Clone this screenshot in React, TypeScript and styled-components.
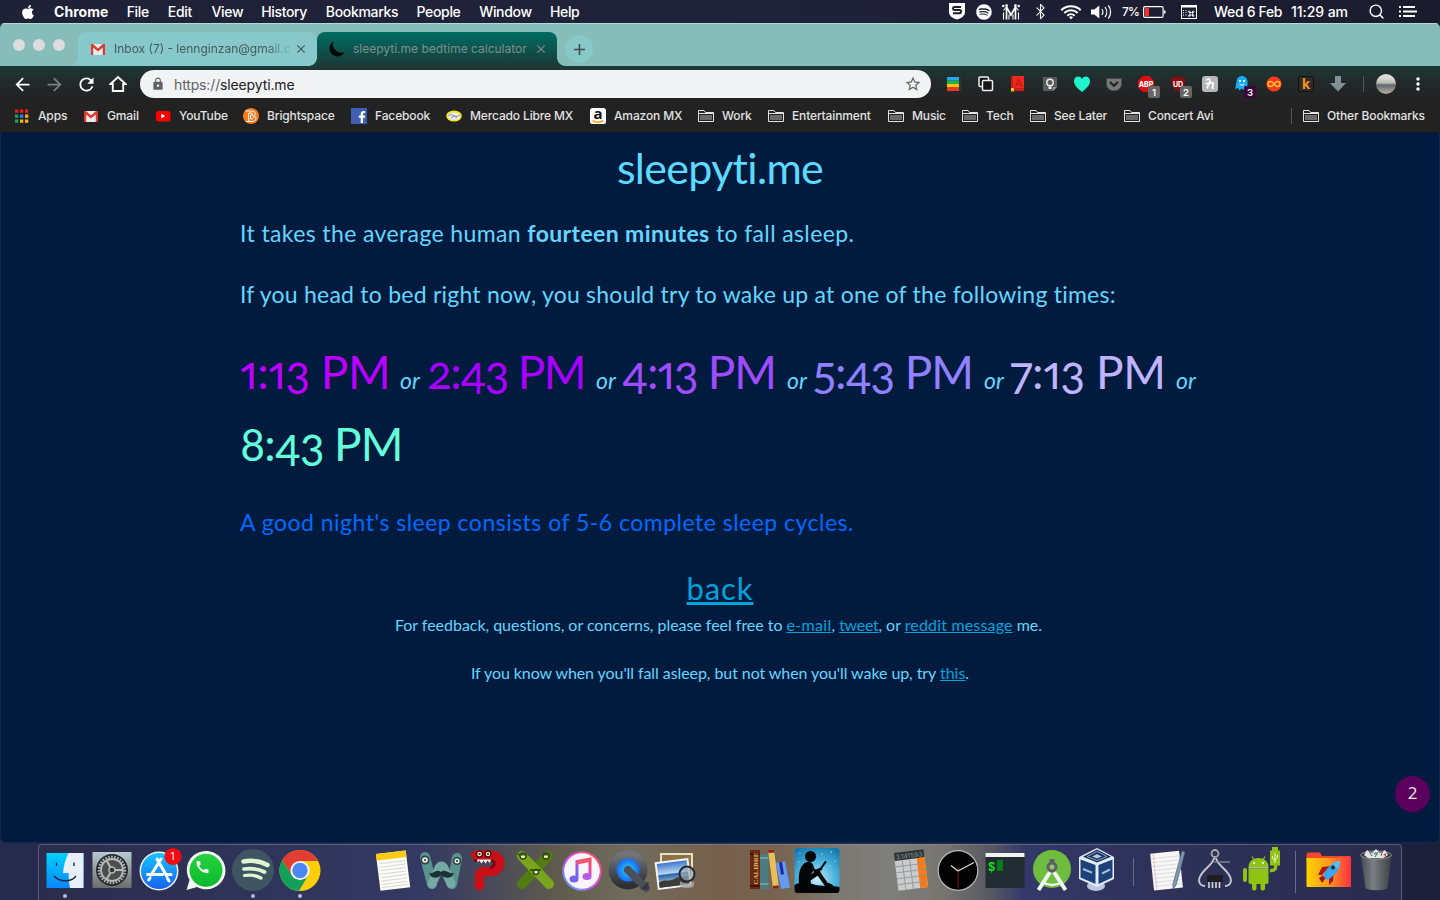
import React from "react";
import styled, { createGlobalStyle } from "styled-components";
import { FaApple, FaFacebookF, FaSpotify } from "react-icons/fa";
import { MdArrowBack, MdArrowForward, MdRefresh, MdLock, MdStarBorder, MdMoreVert, MdCall, MdClose, MdAdd } from "react-icons/md";
import { Bluetooth, Search } from "lucide-react";

const GlobalStyle = createGlobalStyle`
  * { box-sizing: border-box; }
  body { margin: 0; background: #20233f; overflow: hidden; }
  svg { display: block; flex: none; }
`;

const Desktop = styled.div`
  width: 1440px;
  height: 900px;
  display: flex;
  flex-direction: column;
  overflow: hidden;
  background: linear-gradient(90deg, #262a4c, #2a2d4e 50%, #1d203b);
  font-family: Inter, sans-serif;
`;

/* ---------- menu bar ---------- */
const MenuBar = styled.header`
  height: 23px;
  flex: none;
  display: flex;
  align-items: center;
  padding: 0 23px 0 20px;
  background: linear-gradient(90deg, #1f2137, #20223a 50%, #1a1b2d);
  color: #fff;
  font-size: 14px;
  font-weight: 500;
  letter-spacing: -0.33px;
  white-space: pre;
`;
const AppleMark = styled(FaApple)`
  width: 16px;
  height: 16px;
  margin-right: 18px;
`;
const MenuItem = styled.span<{ $w: number; $bold?: boolean }>`
  width: ${(p) => p.$w}px;
  margin-right: 18.7px;
  font-weight: ${(p) => (p.$bold ? 700 : 500)};
  letter-spacing: ${(p) => (p.$bold ? "0.05px" : "-0.33px")};
`;
const Status = styled.div`
  display: flex;
  align-items: center;
  margin-left: auto;
`;
const StatusSlot = styled.div<{ $w: number; $ls?: number }>`
  width: ${(p) => p.$w}px;
  display: flex;
  align-items: center;
  letter-spacing: ${(p) => p.$ls ?? -0.33}px;
`;
const Percent = styled.span`
  width: 21px;
  font-size: 12px;
  letter-spacing: -0.8px;
`;

/* ---------- browser window ---------- */
const Window = styled.div`
  height: 820px;
  flex: none;
  display: flex;
  flex-direction: column;
  overflow: hidden;
  border-radius: 5px 5px 6px 6px;
  background: #222;
`;
const TabStrip = styled.div`
  height: 43px;
  flex: none;
  display: flex;
  align-items: flex-end;
  border-top: 1px solid #b4dad7;
  background: #86bdb9;
`;
const Lights = styled.div`
  width: 78px;
  height: 42px;
  display: flex;
  align-items: center;
  gap: 8px;
  padding: 0 0 1px 13px;
`;
const Light = styled.span`
  width: 12px;
  height: 12px;
  border-radius: 50%;
  background: #dcdcdc;
`;
const Tab = styled.div<{ $active?: boolean }>`
  position: relative;
  width: ${(p) => (p.$active ? 240 : 239)}px;
  height: 34px;
  display: flex;
  align-items: center;
  padding: 0 9px 1px 12px;
  border-radius: 8px 8px 0 0;
  background: ${(p) => (p.$active ? "linear-gradient(#006c62, #0a5750 45%, #1c3936)" : "#87c9ca")};
  color: ${(p) => (p.$active ? "#7e8f8b" : "#46595b")};
  &::before,
  &::after {
    content: "";
    position: absolute;
    bottom: 0;
    width: 8px;
    height: 8px;
  }
  &::before {
    left: -8px;
    background: radial-gradient(circle at 0 0, transparent 7.5px, ${(p) => (p.$active ? "#1b403c" : "#87c9ca")} 8px);
  }
  &::after {
    right: -8px;
    background: ${(p) => (p.$active ? "radial-gradient(circle at 8px 0, transparent 7.5px, #1b403c 8px)" : "none")};
  }
`;
const TabTitle = styled.span<{ $fade?: boolean }>`
  flex: 1;
  margin-left: 8px;
  white-space: nowrap;
  font-size: 12px;
  ${(p) => p.$fade && "mask-image: linear-gradient(90deg, #000 152px, transparent 180px);"}
`;
const NewTab = styled.div`
  width: 28px;
  height: 28px;
  margin: 0 0 3px 8px;
  display: flex;
  align-items: center;
  justify-content: center;
  border-radius: 50%;
  background: #87c9c8;
  color: #46494a;
`;
const Toolbar = styled.div`
  height: 36px;
  flex: none;
  display: flex;
  align-items: center;
  padding-left: 6px;
  background: linear-gradient(#1c3936, #222a29 45%, #222);
  color: #fff;
`;
const ToolSlot = styled.div<{ $dim?: boolean; $w?: number }>`
  width: ${(p) => p.$w ?? 32}px;
  height: 32px;
  flex: none;
  display: flex;
  align-items: center;
  justify-content: center;
  opacity: ${(p) => (p.$dim ? 0.4 : 1)};
`;
const AddressBar = styled.div`
  width: 791px;
  height: 28px;
  flex: none;
  margin: 0 7px 0 6px;
  display: flex;
  align-items: center;
  padding: 0 9px 0 11px;
  border-radius: 14px;
  background: #f1f3f4;
  color: #5f6368;
  font-size: 14px;
  letter-spacing: -0.14px;
`;
const Address = styled.span`
  flex: 1;
  margin-left: 9px;
  b { font-weight: 400; color: #202124; }
`;
const Divider = styled.span<{ $h: number }>`
  width: 1px;
  height: ${(p) => p.$h}px;
  background: #555;
`;
const Profile = styled.div`
  width: 20px;
  height: 20px;
  flex: none;
  margin: 0 12px 0 4px;
  border-radius: 50%;
  background: linear-gradient(#dcdad6 20%, #b9bab8 45%, #5f666b 55%, #8b8a86 75%, #b7aea2);
`;
const Bookmarks = styled.nav`
  height: 31px;
  flex: none;
  display: flex;
  align-items: center;
  gap: 16px;
  padding: 0 14px 3px;
  background: #222;
  border-bottom: 1px solid #101c2c;
  color: #e2e2e2;
  font-size: 12px;
  font-weight: 500;
  letter-spacing: -0.14px;
`;
const Bookmark = styled.div`
  display: flex;
  align-items: center;
  gap: 8px;
`;
const BookmarkLabel = styled.span<{ $w: number }>`
  width: ${(p) => p.$w}px;
  white-space: nowrap;
`;
const OtherBookmarks = styled(Bookmark)`
  margin-left: auto;
  ${Divider} { margin-right: 3px; }
`;

/* ---------- page ---------- */
const Page = styled.main`
  position: relative;
  flex: 1;
  padding: 5px 239px 0;
  background: #001b3e;
  border: 1px solid #0b2850;
  border-top: 0;
  border-radius: 0 0 6px 6px;
  color: #64d6ff;
  font-family: Lato, sans-serif;
  white-space: pre;
`;
const Title = styled.h1`
  margin: 0;
  font-size: 43px;
  font-weight: 400;
  line-height: 60px;
  letter-spacing: -0.7px;
  text-align: center;
  font-variant-ligatures: none;
  color: #5cdaff;
`;
const Sentence = styled.p<{ $top: number; $ls: number; $color?: string }>`
  margin: ${(p) => p.$top}px 0 0;
  font-size: 23px;
  line-height: 30px;
  letter-spacing: ${(p) => p.$ls}px;
  color: ${(p) => p.$color ?? "inherit"};
`;
const Times = styled.p`
  margin: 27px 0 -1px;
  font-size: 46px;
  line-height: 72px;
  white-space: normal;
`;
const Time = styled.span<{ $w: number; $ls: number; $color: string }>`
  display: inline-block;
  width: ${(p) => p.$w}px;
  white-space: nowrap;
  color: ${(p) => p.$color};
  letter-spacing: ${(p) => p.$ls}px;
  font-feature-settings: "onum", "pnum";
`;
const Or = styled.em<{ $w: number }>`
  display: inline-block;
  width: ${(p) => p.$w}px;
  font-size: 23px;
  line-height: 30px;
  white-space: nowrap;
`;
const Link = styled.a<{ $ls?: number }>`
  color: #00a3dc;
  text-decoration: underline;
  letter-spacing: ${(p) => p.$ls ?? 0}px;
`;
const Back = styled.p`
  margin: 33px 0 0;
  font-size: 31px;
  line-height: 36px;
  text-align: center;
`;
const Note = styled.p<{ $top: number; $shift?: number; $ls: number }>`
  margin: ${(p) => p.$top}px 0 0;
  padding-right: ${(p) => p.$shift ?? 0}px;
  font-size: 16px;
  line-height: 20px;
  text-align: center;
  letter-spacing: ${(p) => p.$ls}px;
`;
const CountBadge = styled.div`
  position: absolute;
  right: 9px;
  bottom: 30px;
  width: 35px;
  height: 36px;
  border-radius: 50%;
  background: #5b005c;
  color: #f1e6f1;
  font: 500 17px/34px "Open Sans", sans-serif;
  text-align: center;
`;

/* ---------- dock ---------- */
const Dock = styled.footer`
  width: 1364px;
  height: 56px;
  margin: 1px 0 0 38px;
  display: flex;
  padding-left: 2px;
  border: 1px solid rgba(150, 150, 170, 0.45);
  border-bottom: 0;
  border-radius: 4px 4px 0 0;
  background: linear-gradient(90deg, #2b2d4c 0, #2f3358 200px, #333962 380px, #4b4c58 460px, #605b4c 520px, #716c5e 590px, #755f4a 680px, #766450 740px, #7c7872 800px, #7f7f7b 850px, #75746f 905px, #595962 950px, #34396a 985px, #2f335c 1080px, #2a2c4d 1364px);
`;
const DockSlot = styled.div<{ $running?: boolean }>`
  position: relative;
  width: 47px;
  padding-top: 2px;
  display: flex;
  justify-content: center;
  align-items: flex-start;
  flex: none;
  ${(p) => p.$running && `&::after {
    content: "";
    position: absolute;
    top: 49px;
    width: 4px;
    height: 4px;
    border-radius: 50%;
    background: #b8bad2;
  }`}
`;
const DockDivider = styled.div<{ $w: number; $h: number }>`
  width: ${(p) => p.$w}px;
  flex: none;
  display: flex;
  justify-content: center;
  padding-top: ${(p) => (p.$h > 40 ? 6 : 13)}px;
  &::after {
    content: "";
    width: 1px;
    height: ${(p) => p.$h}px;
    background: #6a6d88;
  }
`;

/* ---------- small icons ---------- */
const Wifi = () => (
  <svg width="22" height="16" viewBox="0 0 22 16" fill="none" stroke="#fff" strokeWidth="2">
    <path d="M1.3 6.2a14 14 0 0 1 19.4 0M4.3 9a9.8 9.8 0 0 1 13.4 0M7.3 11.7a5.6 5.6 0 0 1 7.4 0" />
    <path d="M9 13.2a3 3 0 0 1 4 0l-2 2.2z" fill="#fff" stroke="none" />
  </svg>
);
const Volume = () => (
  <svg width="22" height="16" viewBox="0 0 22 16" fill="none" stroke="#fff" strokeWidth="1.2">
    <path d="M0 5.5h3.3L8.3 1.6v12.8L3.3 10.5H0z" fill="#fff" stroke="none" />
    <path d="M10.8 5a5 5 0 0 1 0 6M14 3a8 8 0 0 1 0 10M17.3 1.3a11 11 0 0 1 0 13.4" />
  </svg>
);
const Battery = () => (
  <svg width="24" height="12" viewBox="0 0 24 12">
    <rect x=".6" y=".6" width="19.5" height="10.8" rx="1.5" fill="none" stroke="#fff" strokeWidth="1.2" />
    <rect x="2" y="2" width="4" height="8" fill="#ff2b30" />
    <path d="M21.2 4c2 .5 2 3.5 0 4z" fill="#fff" />
  </svg>
);
const ShieldMark = () => (
  <svg width="16" height="17" viewBox="0 0 16 17">
    <path d="M0 0h16v9c0 4-4 6.5-8 7.5C4 15.5 0 13 0 9z" fill="#fff" />
    <path d="M12 4H5.5a1.500 1.500 0 0 0 0 3h5a1.500 1.500 0 0 1 0 3.200H4" fill="none" stroke="#1c1d30" strokeWidth="1.9" />
  </svg>
);
const AntennaMark = () => (
  <svg width="18" height="16" viewBox="0 0 18 16" fill="none" stroke="#fff">
    <path d="M4.500 15.500V3l4.500 8 4.500-8v12.500" strokeWidth="1.700" />
    <path d="M1.500 15.500V8.500M16.500 15.500V8.500M4.500 3L1.500 6.500M13.500 3l3 3.500M7 15.500v-5M11 15.500v-5" strokeWidth="1.100" />
    <g fill="#fff" stroke="none"><circle cx="1.300" cy="2" r="1.200" /><circle cx="4.800" cy="1.500" r="1.200" /><circle cx="13.200" cy="1.500" r="1.200" /><circle cx="16.700" cy="2" r="1.200" /></g>
  </svg>
);
const InputMenu = () => (
  <svg width="16" height="14" viewBox="0 0 16 14">
    <rect x=".5" y=".5" width="15" height="13" fill="none" stroke="#fff" />
    <path d="M0 0h16v2.500H0z" fill="#fff" />
    <path d="M2.500 5v7M5 5v7" stroke="#fff" strokeDasharray="1 1.300" />
    <g fill="none" stroke="#fff" strokeWidth=".8">
      <path d="M9 6.500v4.500M11.500 6.500v4.500M8 7.500h4.500M8 10h4.500" />
      <circle cx="8.200" cy="6.700" r=".8" /><circle cx="12.300" cy="6.700" r=".8" /><circle cx="8.200" cy="10.800" r=".8" /><circle cx="12.300" cy="10.800" r=".8" />
    </g>
  </svg>
);
const ListMark = () => (
  <svg width="18" height="11" viewBox="0 0 18 11" stroke="#fff" strokeWidth="1.8">
    <path d="M0 1h2M0 5.500h2M0 10h2M4 1h12M4 5.500h14M4 10h12" />
  </svg>
);
const GmailMark = () => (
  <svg width="16" height="16" viewBox="0 0 16 16">
    <path d="M2 3h12v11H2z" fill="#e9e9e9" />
    <path d="M1 3h2l5 4.500L13 3h2v11h-2.200V6.600L8 10.500 3.200 6.600V14H1z" fill="#db3a30" />
  </svg>
);
const MoonMark = () => (
  <svg width="16" height="16" viewBox="0 0 16 16">
    <path d="M4.500.5A8 8 0 1 0 15.700 11 8.300 8.300 0 0 1 4.500.5z" fill="#020706" />
  </svg>
);
const HomeMark = () => (
  <svg width="18" height="18" viewBox="0 0 18 18" fill="none" stroke="#fff" strokeWidth="1.9">
    <path d="M1.500 9L9 2l7.500 7h-2.300v7H3.800V9z" />
  </svg>
);
const AppsMark = () => (
  <svg width="16" height="16" viewBox="0 0 16 16">
    {["#f11b12", "#f11b12", "#f11b12", "#12a45a", "#2b83f7", "#f7b10c", "#12a45a", "#f7b10c", "#f7b10c"].map((c, i) => (
      <rect key={i} x={1 + (i % 3) * 5} y={1.5 + Math.floor(i / 3) * 5} width="3.3" height="3.3" fill={c} />
    ))}
  </svg>
);
const YouTubeMark = () => (
  <svg width="16" height="16" viewBox="0 0 16 16">
    <rect x="1" y="3" width="14.5" height="10.5" rx="2.5" fill="#f00" />
    <path d="M6.300 5.800v4.600l4-2.300z" fill="#fff" />
  </svg>
);
const BrightspaceMark = () => (
  <svg width="16" height="16" viewBox="0 0 16 16">
    <circle cx="8" cy="8" r="8" fill="#f47a1c" />
    <path d="M2.500 3h6.300c4 0 4.200 3.600 2.200 4.800 3 1.200 2.600 5.700-1.700 5.700H3M5.700 13V5h3c1.500 0 1.500 2.200 0 2.200H7.500m1.300 0c2.500 0 2.500 3.600 0 3.600H7.500V7.200" fill="none" stroke="#fff" strokeWidth="1" />
  </svg>
);
const FacebookMark = () => (
  <svg width="16" height="16" viewBox="0 0 16 16">
    <path d="M0 0h16v16H0z" fill="#3f5fb4" />
    <FaFacebookF x={5} y={3} width={11} height={13} color="#fff" />
  </svg>
);
const MercadoMark = () => (
  <svg width="16" height="16" viewBox="0 0 16 16">
    <ellipse cx="8" cy="8" rx="7.8" ry="5.5" fill="#f5e61b" />
    <ellipse cx="8" cy="8.3" rx="6.3" ry="3.7" fill="#e9edf4" />
    <path d="M2 7.500c3-1 4-1 6 .3s4 0 6-.5M5 10l3-2 3 2" fill="none" stroke="#7a84a8" strokeWidth=".9" />
  </svg>
);
const AmazonMark = () => (
  <svg width="16" height="16" viewBox="0 0 16 16" overflow="visible">
    <rect width="16" height="16" rx="2.5" fill="#fff" />
    <text x="8" y="10.8" textAnchor="middle" fontFamily="Open Sans" fontWeight="700" fontSize="15" fill="#111">a</text>
    <path d="M2.500 12.500c3 2.300 8 2.300 11 .2" fill="none" stroke="#f90" strokeWidth="1.5" />
  </svg>
);
const FolderMark = () => (
  <svg width="16" height="16" viewBox="0 0 16 16">
    <path d="M.5 13.500v-11h5.500l1.500 2h8v9z" fill="#222" stroke="#e4e4e4" />
    <path d="M2 7h12v5H2z" fill="#6a6a6a" />
    <path d="M1 5.500h14.500" stroke="#e4e4e4" />
  </svg>
);

/* ---------- extension icons ---------- */
const Ext = ({ children, count, tone = "#666" }: { children: React.ReactNode; count?: string; tone?: string }) => (
  <svg width="32" height="32" viewBox="0 0 32 32">
    {children}
    {count && <rect x="18" y="18" width="12" height="12" rx="2" fill={tone} />}
    {count && <text x="24" y="27.5" textAnchor="middle" fontFamily="Inter" fontWeight="600" fontSize="9.5" fill="#fff">{count}</text>}
  </svg>
);
const Extensions = () => (
  <>
    <Ext>
      <path d="M9 9h14v14H9z" fill="#333" />
      <path d="M9 9h12v3.500H9z" fill="#24a8ee" /><path d="M9 12.500h12V16H9z" fill="#21b14b" /><path d="M9 16h12v3.500H9z" fill="#fbbf10" /><path d="M9 19.500h12V23H9z" fill="#ee3524" />
    </Ext>
    <Ext>
      <g fill="#161616" stroke="#eee" strokeWidth="1.5"><rect x="9" y="9" width="9.5" height="9.5" rx="1" /><rect x="12.500" y="12.500" width="10" height="10" rx="1" /></g>
    </Ext>
    <Ext>
      <path d="M9 8h13v15H9z" fill="#c61d16" /><path d="M11 8h11v12H11z" fill="#f0281e" /><path d="M9 20h3v4l-1.500-1L9 24z" fill="#e5c82e" />
      <text x="16.5" y="18.5" textAnchor="middle" fontFamily="Liberation Sans" fontSize="11" fill="#b5170f">A</text>
    </Ext>
    <Ext>
      <path d="M9 9h14v10l-4 4H9z" fill="#5b5b5b" /><path d="M19 23v-4h4z" fill="#999" />
      <circle cx="16" cy="14.500" r="3.2" fill="none" stroke="#eee" strokeWidth="1.4" /><path d="M14.500 18.500h3v2.500h-3z" fill="#eee" />
    </Ext>
    <Ext><path d="M16 24C11 20 8 17 8 13c0-5 6-6 8-2 2-4 8-3 8 2 0 4-3 7-8 11z" fill="#1df3cd" /></Ext>
    <Ext>
      <path d="M8.500 10.500h15v5.500c0 9-15 9-15 0z" fill="#777" stroke="#494949" /><path d="M12 14l4 3.800 4-3.800" fill="none" stroke="#222" strokeWidth="2.200" />
    </Ext>
    <Ext count="1">
      <path d="M12.700 8h6.600l4.700 4.700v6.600L19.300 24h-6.600L8 19.300v-6.600z" fill="#df0c12" />
      <text x="16" y="18.8" textAnchor="middle" fontFamily="Inter" fontWeight="800" fontSize="7" fill="#fff">ABP</text>
    </Ext>
    <Ext count="2">
      <path d="M9 10c3 0 5-1 7-2 2 1 4 2 7 2 0 7-2 11-7 14-5-3-7-7-7-14z" fill="#8a0c10" />
      <text x="16" y="18.500" textAnchor="middle" fontFamily="Inter" fontWeight="700" fontSize="7" fill="#fff">UD</text>
    </Ext>
    <Ext>
      <rect x="8" y="8" width="16" height="16" rx="3" fill="#b5b7b8" />
      <path d="M12 12.500c2-2.500 5-2 3.500 1.500L13 20.500M11.500 15.500h4M14.500 16.500c3-3 5.500-2 4.500.5-.8 2-1 3.500.8 3.200" fill="none" stroke="#fff" strokeWidth="1.700" />
    </Ext>
    <Ext count="3" tone="#3b0540">
      <path d="M10.500 14c0-8 11-8 11 0v6l-2-1-2 3-2-1.500-2 2L12 20l-3 1z" fill="#17a9f4" /><circle cx="14" cy="13" r="1.1" fill="#fff" /><circle cx="18" cy="13" r="1.1" fill="#fff" />
      <path d="M13.500 16c1.500 1.500 3.500 1.500 5 0" stroke="#fff" fill="none" />
    </Ext>
    <Ext>
      <circle cx="16" cy="16" r="7.6" fill="#f8391d" />
      <path d="M16 16c-1.500-2-2.500-2.500-3.500-2.500a2.500 2.500 0 0 0 0 5c1 0 2-.5 3.500-2.500s2.500-2.500 3.500-2.500a2.500 2.500 0 0 1 0 5c-1 0-2-.5-3.500-2.500z" fill="none" stroke="#ffc42e" strokeWidth="1.4" />
    </Ext>
    <Ext>
      <rect x="8.5" y="8.5" width="15" height="15" rx="1.5" fill="#2e2a27" stroke="#111" />
      <text x="16" y="21" textAnchor="middle" fontFamily="Inter" fontWeight="700" fontSize="14" fill="#f7921c">k</text>
    </Ext>
    <Ext><path d="M13 8h6v7h5l-8 8.500L8 15h5z" fill="#7f9297" /></Ext>
  </>
);

/* ---------- dock icons ---------- */
const Icon = ({ children }: { children: React.ReactNode }) => (
  <svg width="46" height="46" viewBox="0 0 46 46" overflow="visible">{children}</svg>
);
const Gradients = () => (
  <svg width="0" height="0">
    <defs>
      <linearGradient id="finder" x2="0" y2="1"><stop stopColor="#00d2ff" /><stop offset="1" stopColor="#0b86fb" /></linearGradient>
      <linearGradient id="silver" x2="0" y2="1"><stop stopColor="#b6cbd0" /><stop offset="1" stopColor="#6d6d6d" /></linearGradient>
      <linearGradient id="store" x2="0" y2="1"><stop stopColor="#18c4fc" /><stop offset="1" stopColor="#1763f0" /></linearGradient>
      <linearGradient id="green" x2="0" y2="1"><stop stopColor="#29d33f" /><stop offset="1" stopColor="#08b92c" /></linearGradient>
      <linearGradient id="music" x1="1" x2="0" y2="1"><stop stopColor="#ff4a50" /><stop offset=".5" stopColor="#d94ad9" /><stop offset="1" stopColor="#4c6ff5" /></linearGradient>
      <linearGradient id="ring" x1="1" x2="0" y2="1"><stop stopColor="#ff4f3e" /><stop offset=".5" stopColor="#e04cf0" /><stop offset="1" stopColor="#2fb8f7" /></linearGradient>
      <radialGradient id="qt"><stop stopColor="#2ad0ff" /><stop offset="1" stopColor="#1046e8" /></radialGradient>
      <linearGradient id="steel" x2="0" y2="1"><stop stopColor="#70757c" /><stop offset="1" stopColor="#2c2f34" /></linearGradient>
      <linearGradient id="sea" x2="0" y2="1"><stop stopColor="#3c77cc" /><stop offset=".45" stopColor="#b9d6f2" /><stop offset=".5" stopColor="#2863aa" /><stop offset=".75" stopColor="#7fa3c6" /><stop offset="1" stopColor="#31465b" /></linearGradient>
      <radialGradient id="night" cx=".5" cy=".7" r=".8"><stop stopColor="#c7ebf7" /><stop offset=".5" stopColor="#4fb5df" /><stop offset="1" stopColor="#1176ad" /></radialGradient>
      <linearGradient id="fire"><stop stopColor="#ffd300" /><stop offset=".5" stopColor="#ff9a1e" /><stop offset="1" stopColor="#ff3040" /></linearGradient>
      <linearGradient id="bin"><stop stopColor="#44484c" /><stop offset=".4" stopColor="#7b7f83" /><stop offset="1" stopColor="#3c4044" /></linearGradient>
    </defs>
  </svg>
);
const Finder = () => (
  <Icon>
    <path d="M4.500 6h37v35h-37z" fill="url(#finder)" />
    <path d="M26.500 6c-3 6-5 13-5.500 20h5.700c-.2 5 .3 10 1.300 15h13.500V6z" fill="#e9eff8" />
    <path d="M14.500 15.500v3.500M32 15.500v3.500" stroke="#123" strokeWidth="1.3" />
    <path d="M12 29c6 6.500 17 6.500 22 0" fill="none" stroke="#0d2132" strokeWidth="1.3" />
  </Icon>
);
const Settings = () => (
  <Icon>
    <path d="M3.500 5h39v36h-39z" fill="url(#silver)" />
    <circle cx="23" cy="23" r="16" fill="#272c2e" />
    <circle cx="23" cy="23" r="13" fill="none" stroke="#b4b8b8" strokeWidth="2.500" strokeDasharray="1.600 1.400" />
    <circle cx="23" cy="23" r="11" fill="#4a4f4e" stroke="#b4b8b8" strokeWidth="1.800" />
    <path d="M23 23h11M23 23l-5.500-9.500M23 23l-5.500 9.500" stroke="#b4b8b8" strokeWidth="2.200" />
    <circle cx="23" cy="23" r="3" fill="#2d3335" stroke="#aeb3b2" strokeWidth="1.5" />
  </Icon>
);
const AppStore = () => (
  <Icon>
    <circle cx="23" cy="24" r="19.5" fill="#eef3f8" /><circle cx="23" cy="24" r="18" fill="url(#store)" />
    <g stroke="#fff" strokeWidth="3" strokeLinecap="round"><path d="M21 12l10 17.500M25 12L15 28M11.500 27.500h15M31 27.500h4M14 31l-1.300 2M31.500 31.500l1.500 2.500" /></g>
    <circle cx="37" cy="9.5" r="8.6" fill="#f20b12" />
    <text x="37" y="13.3" textAnchor="middle" fontFamily="Open Sans" fontSize="11" fill="#fff">1</text>
  </Icon>
);
const WhatsApp = () => (
  <Icon>
    <path d="M3.500 43l3-10C-1 18 9 4 23 4c11 0 19.500 9 19.500 19.500C42.500 37 28 47 14 40z" fill="#f2f5f2" />
    <circle cx="23" cy="23.3" r="16.5" fill="url(#green)" /><MdCall x={11.5} y={12} width={23} height={23} color="#fff" />
  </Icon>
);
const Spotify = () => (
  <Icon>
    <circle cx="23" cy="23" r="21" fill="#3f5662" />
    <g fill="none" stroke="#e0f5d3" strokeLinecap="round"><path d="M13.500 14.500c9-1.500 17-.5 24 3.500" strokeWidth="4.5" /><path d="M14 22c7.500-1 14-.5 20.500 3" strokeWidth="3.7" /><path d="M14.500 28.500c6-1 11-.5 16.500 2.500" strokeWidth="3.2" /></g>
  </Icon>
);
const Chrome = () => (
  <Icon>
    <circle cx="23" cy="23.5" r="20.5" fill="#ffce0b" />
    <path d="M5.200 13.200A20.500 20.500 0 0 1 41 14H23l-8.200 14.200z" fill="#e13d31" />
    <path d="M5.200 13.200l9.600 15 8.200 5 8.200-5L22 44A20.500 20.500 0 0 1 5.200 13.200z" fill="#14a05a" />
    <circle cx="23" cy="23.5" r="9.6" fill="#f3f5f8" /><circle cx="23" cy="23.5" r="7.7" fill="#4b87f2" />
  </Icon>
);
const Notes = () => (
  <Icon>
    <g transform="rotate(-7 23 23)">
      <path d="M7 5h30v37H7z" fill="#fbfbf8" /><path d="M7 5h30v6.500H7z" fill="#fccb10" />
      <path d="M9 15h26M9 18.500h26M9 22h26M9 25.500h26M9 29h26M9 32.500h26M9 36h26M9 39h26" stroke="#cfcfcb" strokeWidth=".8" />
    </g>
  </Icon>
);
const Word = () => (
  <Icon>
    <g fill="none" strokeLinecap="round" strokeLinejoin="round"><path d="M7 10l7 27M39 11l-5 26" stroke="#5a938e" strokeWidth="10" /><path d="M14 37l7-16q2.500-4 5 0l7 16" stroke="#74aaa3" strokeWidth="9" /></g>
    <circle cx="7" cy="13" r="4.5" fill="#27494b" /><circle cx="7" cy="13" r="2.8" fill="#f5edd8" /><circle cx="7" cy="13" r="1" fill="#222" /><circle cx="39" cy="14" r="4" fill="#27494b" /><circle cx="39" cy="14" r="2.5" fill="#f5edd8" /><circle cx="39" cy="14" r="1" fill="#222" />
    <path d="M11 26c4 2 7-5 12-1 5-4 8 3 13 1-2 6-9 6-13 2-3 4-10 4-12-2z" fill="#1d3236" />
  </Icon>
);
const Power = () => (
  <Icon>
    <path d="M11 8h13c15 0 14 16 1 16.500h-6q-4.500 0-4.500 4V39" fill="none" stroke="#c91018" strokeWidth="9.5" strokeLinecap="round" strokeLinejoin="round" />
    <path d="M9 13.500h17c5 0 4 7-1 7" fill="none" stroke="#7a080e" strokeWidth="2.500" />
    <circle cx="14.500" cy="7" r="3" fill="#f5e9cc" stroke="#5c0509" strokeWidth="1.5" /><circle cx="23" cy="7" r="3" fill="#f5e9cc" stroke="#5c0509" strokeWidth="1.5" /><circle cx="14.500" cy="7" r="1" fill="#222" /><circle cx="23" cy="7" r="1" fill="#222" />
    <path d="M12 12.500h14l-1.200 3.500-2.300-2.500-2 3-2-3-2 3-2-3-1.500 2z" fill="#fff" />
  </Icon>
);
const Excel = () => (
  <Icon>
    <path d="M36 9L10 37" stroke="#527c12" strokeWidth="10" strokeLinecap="round" /><path d="M10 9l27 28" stroke="#78a51c" strokeWidth="10" strokeLinecap="round" />
    <g fill="#f4eccb" stroke="#2e4a08" strokeWidth="1.500"><circle cx="11" cy="9" r="3" /><circle cx="34" cy="9" r="3" /><circle cx="24" cy="25" r="2.5" /></g>
    <path d="M6 7.500h9M30 7.500h8M18 23h11" stroke="#35550a" strokeWidth="2.2" />
  </Icon>
);
const Music = () => (
  <Icon>
    <circle cx="23" cy="24" r="19.8" fill="url(#ring)" /><circle cx="23" cy="24" r="17.8" fill="#f8f6fb" />
    <path d="M18 31V14.500l13-2.500v16.500" fill="none" stroke="url(#music)" strokeWidth="3" /><path d="M18 13.500l13-2.500v4l-13 2.500z" fill="#f7596a" />
    <ellipse cx="15" cy="32" rx="4.5" ry="3.5" fill="#7b63ee" /><ellipse cx="28" cy="29.500" rx="4.5" ry="3.5" fill="#b45be2" />
  </Icon>
);
const QuickTime = () => (
  <Icon>
    <circle cx="22" cy="23" r="15.500" fill="url(#qt)" stroke="url(#steel)" strokeWidth="8" /><path d="M22 23l18 18" stroke="#4b5057" strokeWidth="8" strokeLinecap="round" /><path d="M34 42.500h8.500V34z" fill="#34373c" />
  </Icon>
);
const Preview = () => (
  <Icon>
    <path d="M7 6h33v27H7z" fill="#e7dfc7" /><path d="M9 8h29v20H9z" fill="#8d7245" />
    <g transform="rotate(-7 20 26)"><path d="M3 13h34v28H3z" fill="#f4f4f2" /><path d="M5 15h30v24H5z" fill="url(#sea)" /><path d="M5 34c6-4 10 1 16-2s8 0 14-2v9H5z" fill="#3b3c38" /></g>
    <circle cx="34" cy="27" r="7.5" fill="#9aa8b4" fillOpacity=".7" stroke="#262a2e" strokeWidth="2" /><path d="M27 34c3 3 11 3 14 0v5c-3 3-11 3-14 0z" fill="#a8aaaa" fillOpacity=".8" />
  </Icon>
);
const Calibre = () => (
  <Icon>
    <path d="M3 3h10v39H3z" fill="#6b2810" /><path d="M3 7h10M3 39h10" stroke="#35130a" strokeWidth="1.5" /><text transform="translate(10.500 37.500) rotate(-90)" fontFamily="Liberation Serif" fontSize="7" fontWeight="700" fill="#e6bb63">CALIBRE</text>
    <path d="M13 7h8.500v35H13z" fill="#4b7c80" /><path d="M13 11h8.500M13 37h8.500" stroke="#99bcc0" />
    <path d="M21 3l6-.5 5 38-6 1z" fill="#e6bf5e" /><path d="M21 3l6-.5.5 3-6 .5zM26 39l5.500-.8.500 2.600-6 1z" fill="#8f2020" />
    <path d="M29 16l9-1.500 5 26-9 1.500z" fill="#659af2" /><path d="M32 15.500l3-.5 2 12-3 1z" fill="#1b2ba5" />
  </Icon>
);
const Kindle = () => (
  <Icon>
    <rect x=".5" y="1" width="45" height="45" rx="3" fill="url(#night)" />
    <path d="M.5 38c6-3 12-3 18-1 9 3 18 1 27 3v3q0 3-3 3h-39q-3 0-3-3z" fill="#030608" />
    <circle cx="16.500" cy="9.500" r="5.5" fill="#030608" /><path d="M5 37c-1-10 1-20 8-22 5-1 7 3 7 8l-4 6 1 8z" fill="#030608" />
    <g fill="none" stroke="#030608" strokeLinejoin="round" strokeLinecap="round"><path d="M10 35l14-9.500" strokeWidth="5" /><path d="M24 25.500L32 37l5 2" strokeWidth="4" /><path d="M17 19l4 5 6-2" strokeWidth="2.6" /><path d="M26.500 22l5-7" strokeWidth="2" /></g>
    <g fill="#dff4fb"><circle cx="6" cy="6" r=".6" /><circle cx="28" cy="7" r=".6" /><circle cx="37" cy="5" r=".7" /><circle cx="41" cy="14" r=".6" /><circle cx="36" cy="19" r=".6" /><circle cx="5" cy="15" r=".6" /></g>
  </Icon>
);
const Calculator = () => (
  <Icon>
    <g transform="rotate(-7 23 23)">
      <path d="M8 5h30v37H8z" fill="#c9cbce" /><path d="M8 4h30v8H8z" fill="#2d3436" /><path d="M30 12h8v30h-8z" fill="#fb7a13" />
      <path d="M8 18h30M8 24h30M8 30h30M8 36h30M15.500 12v30M23 12v30" stroke="#8f9193" strokeWidth=".8" />
      <text x="36" y="10.800" textAnchor="end" fontFamily="Inter" fontSize="6.500" fill="#8b9594">3.141593</text>
    </g>
  </Icon>
);
const Clock = () => (
  <Icon>
    <circle cx="23" cy="23.5" r="19.800" fill="#020202" stroke="#b9b8b6" strokeWidth="1.2" /><path d="M23 20v21" stroke="#7d1613" strokeWidth=".9" /><path d="M23 24l16-8.500M23 24l-7-5.500" stroke="#ddd" strokeWidth="1.3" />
  </Icon>
);
const Terminal = () => (
  <Icon>
    <path d="M3.500 6h39v35h-39z" fill="#212c33" /><path d="M3.500 6h39v4h-39z" fill="#f2f2f2" /><text x="6" y="24" fontFamily="Liberation Mono" fontWeight="700" fontSize="12" fill="#12e512">$</text><path d="M15 13h6v11h-6z" fill="#067d18" />
  </Icon>
);
const Studio = () => (
  <Icon>
    <circle cx="23" cy="22" r="19" fill="#6fbd3e" /><path d="M13 35c7 4 14 4 20 0" fill="none" stroke="#eef2ec" strokeWidth="2.5" /><path d="M21 25L9.500 43M25 25l11.500 18" stroke="#f2f4f2" strokeWidth="4" />
    <path d="M20.500 12h5v5h-5z" fill="#5c6166" /><circle cx="23" cy="20" r="4" fill="#91c66e" stroke="#5c6166" strokeWidth="3" />
  </Icon>
);
const VBox = () => (
  <Icon>
    <ellipse cx="20" cy="39" rx="9" ry="5" fill="#b9c8dd" /><path d="M3 10l18-9 17 9v22l-17 8L3 32z" fill="#e3ebf5" />
    <path d="M4.500 12.500L19.500 18v19L4.500 30.500zM22.500 18l14-5.500v18l-14 6.500z" fill="#1c427b" />
    <path d="M21 2.500l14 7.200L21 15.500 7 9.700z" fill="#14305c" />
    <path d="M21 4.500l10 5L21 13.500l-10-4z" fill="none" stroke="#b5c5da" strokeWidth=".8" /><path d="M16 9.500l5-2.500 5 2.500-5 2z" fill="#b5c5da" />
    <path d="M7 22l9 3.700M26 26.500l8-4" stroke="#a9bcd6" strokeWidth="2" />
  </Icon>
);
const TextEdit = () => (
  <Icon>
    <g transform="rotate(-6 23 23)"><path d="M7 5h29v37H7z" fill="#f7f7f5" /><path d="M7 10h29M7 14h29M7 18h29M7 22h29M7 26h29M7 30h29M7 34h29M7 38h29" stroke="#d3d6de" strokeWidth=".8" /><path d="M10 5v37" stroke="#e3a9a9" strokeWidth=".6" /></g>
    <path d="M37 4l3 1-9 33-3 4v-5z" fill="#7b98b5" stroke="#4f5f70" strokeWidth=".7" />
  </Icon>
);
const Caliper = () => (
  <Icon>
    <circle cx="23" cy="6.500" r="3.5" fill="none" stroke="#a7a9ad" strokeWidth="1.800" /><path d="M22 11c-1 8-14 12-15 22 0 4 3 6 6 6M24 11c1 8 14 12 15 22 0 4-3 6-6 6" fill="none" stroke="#c4c6ca" strokeWidth="2" /><path d="M22 15h16" stroke="#8b8d92" strokeWidth="1.3" />
    <path d="M15 28h16v7H15z" fill="#1e1f22" /><path d="M17 35v6M20.500 35v6M24 35v6M27.500 35v6" stroke="#d8d8d8" strokeWidth="1.6" />
  </Icon>
);
const Android = () => (
  <Icon>
    <g fill="#8fc314"><path d="M9.500 20c0-12 20-12 20 0z" /><path d="M9.500 21.500h20v13.500q0 2-2 2h-16q-2 0-2-2z" /><rect x="4" y="21" width="4" height="14" rx="2" /><rect x="13" y="34" width="4.5" height="9.5" rx="2" /><rect x="21.500" y="34" width="4.5" height="9.5" rx="2" /><path d="M31 3.500h10v15H31zM33 0h6v4h-6z" /></g>
    <path d="M31 23.500c5 .5 6-2 5.500-5.500" fill="none" stroke="#8fc314" strokeWidth="3.500" /><path d="M13 9.500l2 3.500M26 9.500L24 13" stroke="#8fc314" strokeWidth="1.200" /><circle cx="15" cy="16" r="1" fill="#fff" /><circle cx="24" cy="16" r="1" fill="#fff" />
    <path d="M9.500 20.800h20" stroke="#e8f2d0" strokeWidth="1" /><path d="M36 6v10M33.500 9v2.500l2.500 2M38.500 8v2.500l-2.500 2" fill="none" stroke="#eef6dc" strokeWidth="1" />
  </Icon>
);
const RocketFolder = () => (
  <Icon>
    <path d="M.5 8q0-2.500 2.500-2.500h11l2 3.500h27q2 0 2 2v4H.5z" fill="#f9482d" /><path d="M.5 11h44.500v28q0 1-1.500 1h-42q-1 0-1-1z" fill="url(#fire)" />
    <path d="M16 20l8-1-8 9-4 0zM28 24l-1 10-4 4v-9zM13 31l4-3 3 3-4 5z" fill="#a91813" /><path d="M34 14c1 9-7 16-13 19l-4-4c3-7 9-14 17-15z" fill="#3ba3ef" /><path d="M34 14c-3 0-6 1-8 3l6 5c2-3 2-5 2-8z" fill="#55bdf8" /><circle cx="27" cy="20.500" r="2" fill="#133" />
  </Icon>
);
const Trash = () => (
  <Icon>
    <path d="M7.500 8l31 0-4 33c-3 3-19 3-22 0z" fill="url(#bin)" /><ellipse cx="23" cy="8" rx="15.500" ry="4" fill="#35383c" stroke="#8d9093" />
    <path d="M11 8l3-5 5 3 4-4 4 4 5-3 3 5-5 3H15z" fill="#e6e5e2" /><path d="M16 4l3 5M25 5l-3 5M30 3l-2 6" stroke="#555" /><path d="M20 7l3-2 2 3z" fill="#2aa5b5" /><path d="M30 8l3-2v3z" fill="#c7402c" />
  </Icon>
);

const menus: [string, number][] = [["File", 22.4], ["Edit", 25], ["View", 31], ["History", 46], ["Bookmarks", 72], ["People", 44], ["Window", 52], ["Help", 30]];
const bookmarks: [string, number, React.FC][] = [
  ["Apps", 29, AppsMark], ["Gmail", 32, GmailMark], ["YouTube", 48, YouTubeMark], ["Brightspace", 68, BrightspaceMark],
  ["Facebook", 55, FacebookMark], ["Mercado Libre MX", 104, MercadoMark], ["Amazon MX", 68, AmazonMark], ["Work", 30, FolderMark],
  ["Entertainment", 80, FolderMark], ["Music", 34, FolderMark], ["Tech", 28, FolderMark], ["See Later", 54, FolderMark], ["Concert Avi", 67, FolderMark],
];
const times: [string, number, number, string, number][] = [
  ["1:13 PM", 160, -0.5, "#bb00ff", 27],
  ["2:43 PM", 169, -1.6, "#a800ff", 26],
  ["4:13 PM", 165, -1.15, "#a14bff", 26],
  ["5:43 PM", 171, -1, "#9180ff", 26],
  ["7:13 PM", 166, -0.4, "#c0b3ff", 22],
  ["8:43 PM", 166, -1, "#63ffdc", 0],
];
const dock: (React.FC | null)[] = [Finder, Settings, AppStore, WhatsApp, Spotify, Chrome, null, Notes, Word, Power, Excel, Music, QuickTime, Preview, null, Calibre, Kindle, null, Calculator, Clock, Terminal, Studio, VBox];
const running: React.FC[] = [Finder, Spotify, Chrome];

export default function App() {
  return (
    <Desktop>
      <GlobalStyle />
      <MenuBar>
        <AppleMark />
        <MenuItem $w={54} $bold>Chrome</MenuItem>
        {menus.map(([t, w]) => <MenuItem key={t} $w={w}>{t}</MenuItem>)}
        <Status>
          <StatusSlot $w={27}><ShieldMark /></StatusSlot>
          <StatusSlot $w={26}><FaSpotify size={16} /></StatusSlot>
          <StatusSlot $w={30}><AntennaMark /></StatusSlot>
          <StatusSlot $w={28}><Bluetooth size={17} strokeWidth={1.6} /></StatusSlot>
          <StatusSlot $w={31}><Wifi /></StatusSlot>
          <StatusSlot $w={31}><Volume /></StatusSlot>
          <Percent>7%</Percent>
          <StatusSlot $w={38}><Battery /></StatusSlot>
          <StatusSlot $w={33}><InputMenu /></StatusSlot>
          <StatusSlot $w={77}>Wed 6 Feb</StatusSlot>
          <StatusSlot $w={77} $ls={-0.06}>11:29 am</StatusSlot>
          <StatusSlot $w={31}><Search size={17} strokeWidth={2} /></StatusSlot>
          <ListMark />
        </Status>
      </MenuBar>

      <Window>
        <TabStrip>
          <Lights><Light /><Light /><Light /></Lights>
          <Tab>
            <GmailMark />
            <TabTitle $fade>Inbox (7) - lennginzan@gmail.c</TabTitle>
            <MdClose size={14} />
          </Tab>
          <Tab $active>
            <MoonMark />
            <TabTitle>sleepyti.me bedtime calculator</TabTitle>
            <MdClose size={14} />
          </Tab>
          <NewTab><MdAdd size={19} /></NewTab>
        </TabStrip>
        <Toolbar>
          <ToolSlot><MdArrowBack size={21} /></ToolSlot>
          <ToolSlot $dim><MdArrowForward size={21} /></ToolSlot>
          <ToolSlot><MdRefresh size={21} /></ToolSlot>
          <ToolSlot><HomeMark /></ToolSlot>
          <AddressBar>
            <MdLock size={14} />
            <Address>https://<b>sleepyti.me</b></Address>
            <MdStarBorder size={18} />
          </AddressBar>
          <Extensions />
          <ToolSlot $w={18}><Divider $h={16} /></ToolSlot>
          <Profile />
          <MdMoreVert size={20} />
        </Toolbar>
        <Bookmarks>
          {bookmarks.map(([label, w, Mark]) => (
            <Bookmark key={label}><Mark /><BookmarkLabel $w={w}>{label}</BookmarkLabel></Bookmark>
          ))}
          <OtherBookmarks><Divider $h={16} /><FolderMark /><BookmarkLabel $w={99}>Other Bookmarks</BookmarkLabel></OtherBookmarks>
        </Bookmarks>

        <Page>
          <Title>sleepyti.me</Title>
          <Sentence $top={20} $ls={0.38}>It takes the average human <b>fourteen minutes</b> to fall asleep.</Sentence>
          <Sentence $top={31} $ls={0.235}>If you head to bed right now, you should try to wake up at one of the following times:</Sentence>
          <Times>
            {times.map(([t, w, ls, color, or]) => (
              <React.Fragment key={t}>
                <Time $w={w} $ls={ls} $color={color}>{t}</Time>
                {or > 0 && <Or $w={or}>or</Or>}
              </React.Fragment>
            ))}
          </Times>
          <Sentence $top={28} $ls={0.488} $color="#0069ff">A good night's sleep consists of 5-6 complete sleep cycles.</Sentence>
          <Back><Link $ls={0.9}>back</Link></Back>
          <Note $top={9} $shift={3} $ls={-0.03}>
            For feedback, questions, or concerns, please feel free to <Link $ls={0.3}>e-mail</Link>, <Link $ls={-0.3}>tweet</Link>, or <Link $ls={0.17}>reddit message</Link> me.
          </Note>
          <Note $top={28} $ls={-0.076}>
            If you know when you'll fall asleep, but not when you'll wake up, try <Link>this</Link>.
          </Note>
          <CountBadge>2</CountBadge>
        </Page>
      </Window>

      <Dock>
        {dock.map((Item, i) => <DockSlot key={i} $running={!!Item && running.includes(Item)}>{Item && <Item />}</DockSlot>)}
        <DockDivider $w={22} $h={28} />
        <DockSlot><TextEdit /></DockSlot>
        <DockSlot><Caliper /></DockSlot>
        <DockSlot><Android /></DockSlot>
        <DockDivider $w={20} $h={42} />
        <DockSlot><RocketFolder /></DockSlot>
        <DockSlot><Trash /></DockSlot>
      </Dock>
      <Gradients />
    </Desktop>
  );
}
